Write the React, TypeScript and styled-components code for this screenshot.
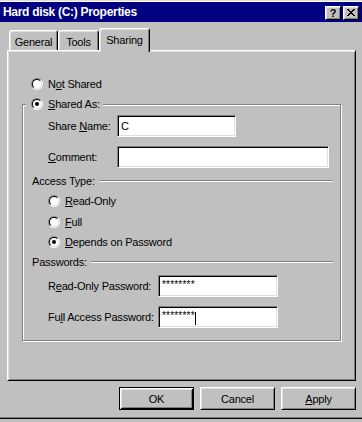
import styled, { createGlobalStyle } from 'styled-components';

const GlobalStyle = createGlobalStyle`
  html, body {
    margin: 0;
    padding: 0;
    background: #c0c0c0;
  }
  body {
    font-family: "Liberation Sans", Arial, sans-serif;
    font-size: 11px;
    letter-spacing: -0.2px;
    color: #000;
  }
`;

const Window = styled.div`
  width: 362px;
  height: 419px;
  box-sizing: border-box;
  padding-top: 1px;
  background: #c0c0c0;
  border-top: 1px solid #dfdfdf;
  border-bottom: 1px solid #000;
  box-shadow: inset 0 1px #fff, inset 0 -1px #808080;
  display: flex;
  flex-direction: column;
`;

const TitleBar = styled.div`
  height: 20px;
  flex: none;
  background: #000080;
  color: #fff;
  display: flex;
  align-items: center;
  padding: 0 3px 0 3px;
`;

const Title = styled.div`
  flex: 1;
  font-weight: bold;
  font-size: 12px;
  letter-spacing: -0.3px;
`;

const TitleButtons = styled.div`
  display: flex;
  gap: 2px;
  margin-top: 1px;
`;

const TitleButton = styled.div`
  width: 16px;
  height: 14px;
  box-sizing: border-box;
  background: #c0c0c0;
  border: 1px solid;
  border-color: #fff #000 #000 #fff;
  box-shadow: inset 1px 1px #dfdfdf, inset -1px -1px #808080;
  color: #000;
  font-weight: bold;
  font-size: 11px;
  line-height: 12px;
  display: flex;
  align-items: center;
  justify-content: center;
`;

const Content = styled.div`
  padding: 6px 6px 0 7px;
  display: flex;
  flex-direction: column;
`;

const TabStrip = styled.div`
  display: flex;
  align-items: flex-end;
  height: 22px;
  padding-left: 2px;
`;

const Tab = styled.div<{ $width: number; $active?: boolean }>`
  width: ${p => p.$width}px;
  height: ${p => (p.$active ? 24 : 20)}px;
  margin-bottom: ${p => (p.$active ? -2 : 0)}px;
  position: relative;
  z-index: ${p => (p.$active ? 1 : 0)};
  box-sizing: border-box;
  background: #c0c0c0;
  border: 1px solid;
  border-bottom: none;
  border-color: #fff #000 #000 #fff;
  border-radius: 3px 3px 0 0;
  box-shadow: inset 1px 1px #dfdfdf, inset -1px 0 #808080;
  padding-top: 3px;
  line-height: 16px;
  text-align: center;
`;

const Panel = styled.div`
  height: 331px;
  box-sizing: border-box;
  border: 1px solid;
  border-color: #fff #000 #000 #fff;
  box-shadow: inset 1px 1px #dfdfdf, inset -1px -1px #808080;
  padding: 25px 0 0 14px;
  display: flex;
  flex-direction: column;
`;

const RadioRow = styled.label<{ $indent?: number; $top?: number }>`
  display: flex;
  align-items: center;
  gap: 5px;
  height: 16px;
  line-height: 16px;
  white-space: nowrap;
  margin-left: ${p => p.$indent ?? 0}px;
  margin-top: ${p => p.$top ?? 0}px;
`;

const RadioOuter = styled.span`
  width: 12px;
  height: 12px;
  box-sizing: border-box;
  flex: none;
  border-radius: 50%;
  border: 1px solid;
  border-color: #808080 #fff #fff #808080;
  display: flex;
`;

const RadioInner = styled.span<{ $checked?: boolean }>`
  flex: 1;
  border-radius: 50%;
  border: 1px solid;
  border-color: #000 #dfdfdf #dfdfdf #000;
  background: #fff;
  display: flex;
  align-items: center;
  justify-content: center;

  &::after {
    content: '';
    width: 4px;
    height: 4px;
    border-radius: 50%;
    background: #000;
    display: ${p => (p.$checked ? 'block' : 'none')};
  }
`;

const GroupBox = styled.fieldset`
  width: 319px;
  box-sizing: border-box;
  margin: 4px 0 0 0;
  padding: 0 0 12px 9px;
  border: 1px solid #808080;
  box-shadow: 1px 1px 0 #fff, inset 1px 1px 0 #fff;
  min-width: 0;
`;

const Legend = styled.legend`
  margin-left: -6px;
  padding: 0 3px 0 5px;
  background: #c0c0c0;
  line-height: 16px;
`;

const FieldRow = styled.div<{ $label: number; $top: number }>`
  display: grid;
  grid-template-columns: ${p => p.$label}px auto;
  align-items: center;
  margin-left: 16px;
  margin-top: ${p => p.$top}px;
  height: 22px;
  white-space: nowrap;
`;

const TextBox = styled.div<{ $width: number }>`
  width: ${p => p.$width}px;
  height: 22px;
  box-sizing: border-box;
  background: #fff;
  border: 1px solid;
  border-color: #808080 #fff #fff #808080;
  box-shadow: inset 1px 1px #000, inset -1px -1px #dfdfdf;
  padding: 0 3px;
  line-height: 20px;
  white-space: nowrap;
  display: flex;
  align-items: center;
`;

const Caret = styled.span`
  width: 1px;
  height: 13px;
  background: #000;
  margin-top: 2px;
`;

const Separator = styled.div<{ $top: number }>`
  display: flex;
  align-items: center;
  gap: 4px;
  height: 16px;
  line-height: 16px;
  margin-top: ${p => p.$top}px;
  margin-right: 7px;

  &::after {
    content: '';
    flex: 1;
    height: 1px;
    background: #808080;
    border-bottom: 1px solid #fff;
  }
`;

const ButtonRow = styled.div`
  display: flex;
  justify-content: flex-end;
  gap: 6px;
  margin-top: 6px;
`;

const Button = styled.button<{ $default?: boolean }>`
  width: 75px;
  height: 23px;
  box-sizing: border-box;
  padding: 0;
  font: inherit;
  letter-spacing: inherit;
  color: #000;
  background: #c0c0c0;
  border: 1px solid;
  border-color: ${p => (p.$default ? '#000' : '#fff #000 #000 #fff')};
  box-shadow: ${p =>
    p.$default
      ? 'inset 1px 1px #fff, inset -1px -1px #000, inset 2px 2px #dfdfdf, inset -2px -2px #808080'
      : 'inset 1px 1px #dfdfdf, inset -1px -1px #808080'};
`;

const Stars = styled.span`
  font-size: 10px;
  letter-spacing: 0.2px;
  margin-top: -3px;
`;

export default function App() {
  return (
    <>
      <GlobalStyle />
      <Window>
        <TitleBar>
          <Title>Hard disk (C:) Properties</Title>
          <TitleButtons>
            <TitleButton>?</TitleButton>
            <TitleButton>
              <svg width="8" height="7" viewBox="0 0 8 7" shapeRendering="crispEdges">
                <path d="M0 0h2v1h-2zM6 0h2v1h-2zM1 1h2v1h-2zM5 1h2v1h-2zM2 2h4v1h-4zM3 3h2v1h-2zM2 4h4v1h-4zM1 5h2v1h-2zM5 5h2v1h-2zM0 6h2v1h-2zM6 6h2v1h-2z" fill="#000" />
              </svg>
            </TitleButton>
          </TitleButtons>
        </TitleBar>

        <Content>
          <TabStrip>
            <Tab $width={49}>General</Tab>
            <Tab $width={41}>Tools</Tab>
            <Tab $width={51} $active>Sharing</Tab>
          </TabStrip>

          <Panel>
            <RadioRow $indent={9}>
              <RadioOuter><RadioInner /></RadioOuter>
              <span>N<u>o</u>t Shared</span>
            </RadioRow>

            <GroupBox>
              <Legend>
                <RadioRow>
                  <RadioOuter><RadioInner $checked /></RadioOuter>
                  <span><u>S</u>hared As:</span>
                </RadioRow>
              </Legend>

              <FieldRow $label={69} $top={3}>
                <span>Share <u>N</u>ame:</span>
                <TextBox $width={119}>C</TextBox>
              </FieldRow>
              <FieldRow $label={69} $top={9}>
                <span><u>C</u>omment:</span>
                <TextBox $width={212} />
              </FieldRow>

              <Separator $top={5}>Access Type:</Separator>
              <RadioRow $indent={16} $top={4}>
                <RadioOuter><RadioInner /></RadioOuter>
                <span><u>R</u>ead-Only</span>
              </RadioRow>
              <RadioRow $indent={16} $top={5}>
                <RadioOuter><RadioInner /></RadioOuter>
                <span><u>F</u>ull</span>
              </RadioRow>
              <RadioRow $indent={16} $top={4}>
                <RadioOuter><RadioInner $checked /></RadioOuter>
                <span><u>D</u>epends on Password</span>
              </RadioRow>

              <Separator $top={4}>Passwords:</Separator>
              <FieldRow $label={110} $top={5}>
                <span>R<u>e</u>ad-Only Password:</span>
                <TextBox $width={120}><Stars>********</Stars></TextBox>
              </FieldRow>
              <FieldRow $label={110} $top={9}>
                <span>Fu<u>l</u>l Access Password:</span>
                <TextBox $width={120}><Stars>********</Stars><Caret /></TextBox>
              </FieldRow>
            </GroupBox>
          </Panel>

          <ButtonRow>
            <Button $default>OK</Button>
            <Button>Cancel</Button>
            <Button><u>A</u>pply</Button>
          </ButtonRow>
        </Content>
      </Window>
    </>
  );
}
